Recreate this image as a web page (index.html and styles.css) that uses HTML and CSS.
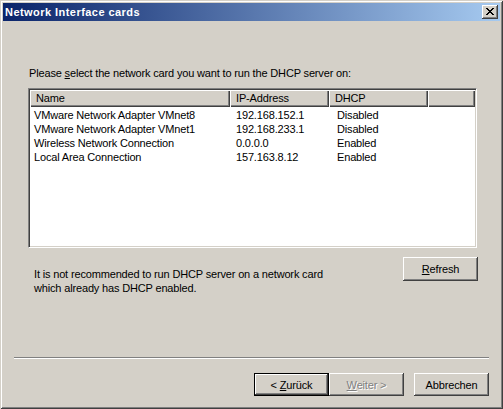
FILE: index.html
```html
<!DOCTYPE html>
<html>
<head>
<meta charset="utf-8">
<link rel="stylesheet" href="styles.css">
</head>
<body>
<div class="window">
  <div class="titlebar">
    <span class="title">Network Interface cards</span>
    <span class="close"><svg width="8" height="7" viewBox="0 0 8 7"><path d="M0 0h2v1h1v1h2v-1h1v-1h2v1h-1v1h-1v1h-1v1h1v1h1v1h1v1h-2v-1h-1v-1h-2v1h-1v1h-2v-1h1v-1h1v-1h1v-1h-1v-1h-1v-1h-1z" fill="#000"/></svg></span>
  </div>
  <div class="content">
    <p class="prompt">Please <u>s</u>elect the network card you want to run the DHCP server on:</p>
    <div class="list">
      <div class="header">
        <div class="hcell">Name</div>
        <div class="hcell">IP-Address</div>
        <div class="hcell">DHCP</div>
        <div class="hcell hfill"></div>
      </div>
      <div class="row"><span>VMware Network Adapter VMnet8</span><span>192.168.152.1</span><span>Disabled</span></div>
      <div class="row"><span>VMware Network Adapter VMnet1</span><span>192.168.233.1</span><span>Disabled</span></div>
      <div class="row"><span>Wireless Network Connection</span><span>0.0.0.0</span><span>Enabled</span></div>
      <div class="row"><span>Local Area Connection</span><span>157.163.8.12</span><span>Enabled</span></div>
    </div>
    <div class="notice-row">
      <p class="notice">It is not recommended to run DHCP server on a network card<br>which already has DHCP enabled.</p>
      <button class="btn"><u>R</u>efresh</button>
    </div>
    <div class="sep"></div>
    <div class="buttons">
      <button class="btn default">&lt; <u>Z</u>urück</button>
      <button class="btn disabled"><u>W</u>eiter &gt;</button>
      <button class="btn cancel">Abbrechen</button>
    </div>
  </div>
</div>
</body>
</html>
```
FILE: styles.css
```css
html, body {
  margin: 0;
  padding: 0;
  background: #d4d0c8;
}
.window {
  box-sizing: border-box;
  width: 503px;
  height: 409px;
  padding: 3px;
  background: #d4d0c8;
  box-shadow: inset 1px 1px #d4d0c8, inset -1px -1px #404040, inset 2px 2px #ffffff, inset -2px -2px #808080;
  font-family: "Liberation Sans", Arial, sans-serif;
  font-size: 11px;
  letter-spacing: -0.16px;
  color: #000;
  display: flex;
  flex-direction: column;
}
.titlebar {
  height: 18px;
  background: linear-gradient(to right, #0a246a, #a6caf0);
  display: flex;
  align-items: center;
  justify-content: space-between;
  padding: 0 2px 0 2px;
}
.title {
  color: #fff;
  font-weight: bold;
  font-size: 11px;
  letter-spacing: 0.45px;
}
.close {
  box-sizing: border-box;
  width: 16px;
  height: 14px;
  background: #d4d0c8;
  box-shadow: inset -1px -1px #404040, inset 1px 1px #ffffff, inset -2px -2px #808080;
  display: flex;
  align-items: center;
  justify-content: center;
  padding: 0 1px 1px 0;
}
.close svg { display: block; }
.content {
  flex: 1;
  display: flex;
  flex-direction: column;
}
.prompt {
  margin: 46px 0 0 26px;
  line-height: 13px;
}
.list {
  box-sizing: border-box;
  margin: 8px 0 0 25px;
  width: 449px;
  height: 160px;
  background: #fff;
  border: 1px solid;
  border-color: #808080 #fff #fff #808080;
  box-shadow: inset 1px 1px #404040, inset -1px -1px #d4d0c8;
  padding: 1px;
}
.header {
  display: grid;
  grid-template-columns: 200px 99px 99px 1fr;
  height: 17px;
}
.hcell {
  box-sizing: border-box;
  background: #d4d0c8;
  box-shadow: inset 1px 1px #fff, inset -1px -1px #404040, inset -2px -2px #808080;
  padding: 2px 0 0 6px;
  line-height: 13px;
}
.row {
  display: grid;
  grid-template-columns: 202px 101px 1fr;
  height: 14px;
  line-height: 14px;
  padding-left: 4px;
}
.header + .row { margin-top: 1px; }
.notice-row {
  display: flex;
  justify-content: space-between;
  align-items: flex-start;
  margin: 9px 22px 0 31px;
}
.notice {
  margin: 10px 0 0 0;
  line-height: 14px;
}
.btn {
  box-sizing: border-box;
  width: 75px;
  height: 23px;
  padding: 0;
  font-family: "Liberation Sans", Arial, sans-serif;
  font-size: 11px;
  letter-spacing: -0.16px;
  color: #000;
  background: #d4d0c8;
  border: none;
  box-shadow: inset -1px -1px #404040, inset 1px 1px #ffffff, inset -2px -2px #808080;
}
.notice-row .btn {
  height: 24px;
}
.sep {
  margin: 62px 11px 0 11px;
  height: 0;
  border-top: 1px solid #808080;
  border-bottom: 1px solid #ffffff;
}
.buttons {
  display: flex;
  justify-content: flex-end;
  margin: 14px 11px 0 0;
}
.btn.default {
  border: 1px solid #000;
}
.btn.disabled {
  color: #808080;
  text-shadow: 1px 1px #ffffff;
}
.btn.cancel {
  margin-left: 10px;
}
```
